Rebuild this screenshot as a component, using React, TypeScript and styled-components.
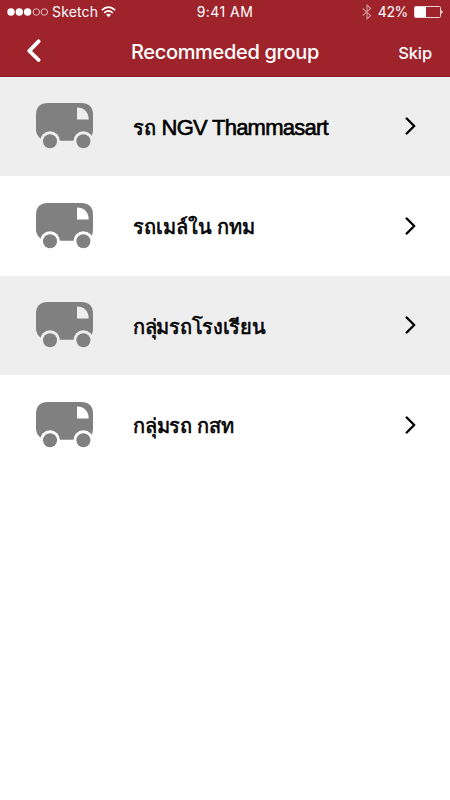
import React from "react";
import styled, { createGlobalStyle } from "styled-components";

const GlobalStyle = createGlobalStyle`
  * { box-sizing: border-box; }
  body { margin: 0; background: #fff; font-family: Inter, sans-serif; }
  svg { display: block; flex: none; }
`;

const Screen = styled.main`
  width: 100%;
  min-height: 800px;
  background: #fff;
`;

const Header = styled.header`
  height: 76.5px;
  background: #9f232b;
  color: #fff;
  border-bottom: 1px solid #8d1c25;
`;

const StatusBar = styled.div`
  height: 24px;
  padding: 0 7px;
  display: grid;
  grid-template-columns: 1fr auto 1fr;
  align-items: center;
  font-size: 14px;
  line-height: 24px;
`;

const StatusGroup = styled.div<{ $end?: boolean }>`
  display: flex;
  align-items: center;
  justify-content: ${(p) => (p.$end ? "flex-end" : "flex-start")};
`;

const Carrier = styled.span`
  margin: 0 3px 0 4px;
  letter-spacing: 0.15px;
`;

const Clock = styled.time`
  letter-spacing: 0.45px;
`;

const Battery = styled.span`
  margin: 0 6px 0 6px;
  letter-spacing: -0.35px;
`;

const NavBar = styled.nav`
  height: 52px;
  padding: 0 18px 0 26px;
  display: grid;
  grid-template-columns: 1fr auto 1fr;
  align-items: center;
`;

const NavButton = styled.button<{ $end?: boolean }>`
  border: 0;
  padding: ${(p) => (p.$end ? "6px 0 0" : "1px 0 0")};
  background: none;
  color: inherit;
  font: 500 16.5px/24px Inter, sans-serif;
  letter-spacing: -0.1px;
  justify-self: ${(p) => (p.$end ? "end" : "start")};
`;

const Title = styled.h1`
  margin: 4px 0 0 -8px;
  font-size: 20px;
  line-height: 28px;
  font-weight: 500;
  letter-spacing: -0.33px;
  white-space: nowrap;
`;

const List = styled.ul`
  margin: 0;
  padding: 0;
  list-style: none;
`;

const Row = styled.li`
  height: 99.5px;
  padding: 0 33px 0 36px;
  display: grid;
  grid-template-columns: 97px 1fr 12px;
  align-items: center;
  color: #fff;
  background: currentColor;
  &:nth-child(odd) { color: #eee; }
`;

const Label = styled.span<{ $spacing: number }>`
  color: #000;
  padding-top: 3px;
  font-family: "Liberation Sans", "Noto Sans", sans-serif;
  font-size: 20px;
  line-height: 32px;
  font-weight: 400;
  -webkit-text-stroke: 0.6px #000;
  white-space: nowrap;
  letter-spacing: ${(p) => p.$spacing}px;
`;

const Latin = styled.span`
  font-size: 22px;
  letter-spacing: -0.75px;
`;

const Van = () => (
  <svg width="58" height="46" viewBox="0 0 58 46">
    <path d="M12 0H45Q57 0 57 12V27Q57 32 53.5 35.8L47 37.7H14L5 36Q0 32 0 27V12Q0 0 12 0Z" fill="#808080" />
    <path d="M41 4.5C48 4.5 52.7 9 52.7 16.5H41Z" fill="currentColor" />
    {[14, 47.4].map((x) => (
      <g key={x}>
        <circle cx={x} cy="38.3" r="10" fill="currentColor" />
        <circle cx={x} cy="38.3" r="7" fill="#808080" />
      </g>
    ))}
  </svg>
);

const Signal = () => (
  <svg width="41" height="10" viewBox="0 0 41 10">
    {[4, 12.3, 20.6].map((x) => <circle key={x} cx={x} cy="5" r="3.7" fill="#fff" />)}
    {[29.3, 37.3].map((x) => <circle key={x} cx={x} cy="5" r="3.25" fill="none" stroke="#fff" strokeWidth=".7" />)}
  </svg>
);

const Wifi = () => (
  <svg width="15" height="12" viewBox="0 0 15 12" fill="none" stroke="#fff" strokeWidth="1.7">
    <path d="M.8 4.2Q7.5-1.8 14.2 4.2M3.2 6.8Q7.5 3 11.8 6.8" />
    <path d="M5 8.8Q7.5 6.7 10 8.8L7.5 11.3Z" fill="#fff" stroke="none" />
  </svg>
);

const Bluetooth = () => (
  <svg width="10" height="16" viewBox="0 0 10 16" fill="none" stroke="#cf9095" strokeWidth="1.2">
    <path d="M.7 4.4 8.6 11.5 5 15V1L8.6 4.5.7 11.6" />
  </svg>
);

const BatteryIcon = () => (
  <svg width="29" height="12" viewBox="0 0 29 12">
    <rect x=".5" y=".5" width="26" height="11" rx="1" fill="none" stroke="#fff" strokeWidth=".8" />
    <rect x="1" y="1" width="11" height="10" fill="#fff" />
    <path d="M27.4 4Q30 6 27.4 8Z" fill="#fff" />
  </svg>
);

const groups = [
  { text: "รถ ", latin: "NGV Thammasart", spacing: 0 },
  { text: "รถเมล์ใน กทม", spacing: -0.08 },
  { text: "กลุ่มรถโรงเรียน", spacing: -0.3 },
  { text: "กลุ่มรถ กสท", spacing: -0.25 },
];

export default function App() {
  return (
    <Screen>
      <GlobalStyle />
      <Header>
        <StatusBar>
          <StatusGroup><Signal /><Carrier>Sketch</Carrier><Wifi /></StatusGroup>
          <Clock>9:41 AM</Clock>
          <StatusGroup $end><Bluetooth /><Battery>42%</Battery><BatteryIcon /></StatusGroup>
        </StatusBar>
        <NavBar>
          <NavButton aria-label="Back">
            <svg width="16" height="24" viewBox="0 0 16 24" fill="none" stroke="#fff" strokeWidth="3.8" strokeLinecap="round" strokeLinejoin="round">
              <path d="M12.6 2.3 3.3 11.8 12.6 21" />
            </svg>
          </NavButton>
          <Title>Recommeded group</Title>
          <NavButton $end>Skip</NavButton>
        </NavBar>
      </Header>
      <List>
        {groups.map((g) => (
          <Row key={g.text}>
            <Van />
            <Label $spacing={g.spacing}>{g.text}{g.latin && <Latin>{g.latin}</Latin>}</Label>
            <svg width="12" height="18" viewBox="0 0 12 18" fill="none" stroke="#000" strokeWidth="2.4" strokeLinecap="round" strokeLinejoin="round">
              <path d="M1.7 1.5 9.2 9 1.7 16.5" />
            </svg>
          </Row>
        ))}
      </List>
    </Screen>
  );
}
